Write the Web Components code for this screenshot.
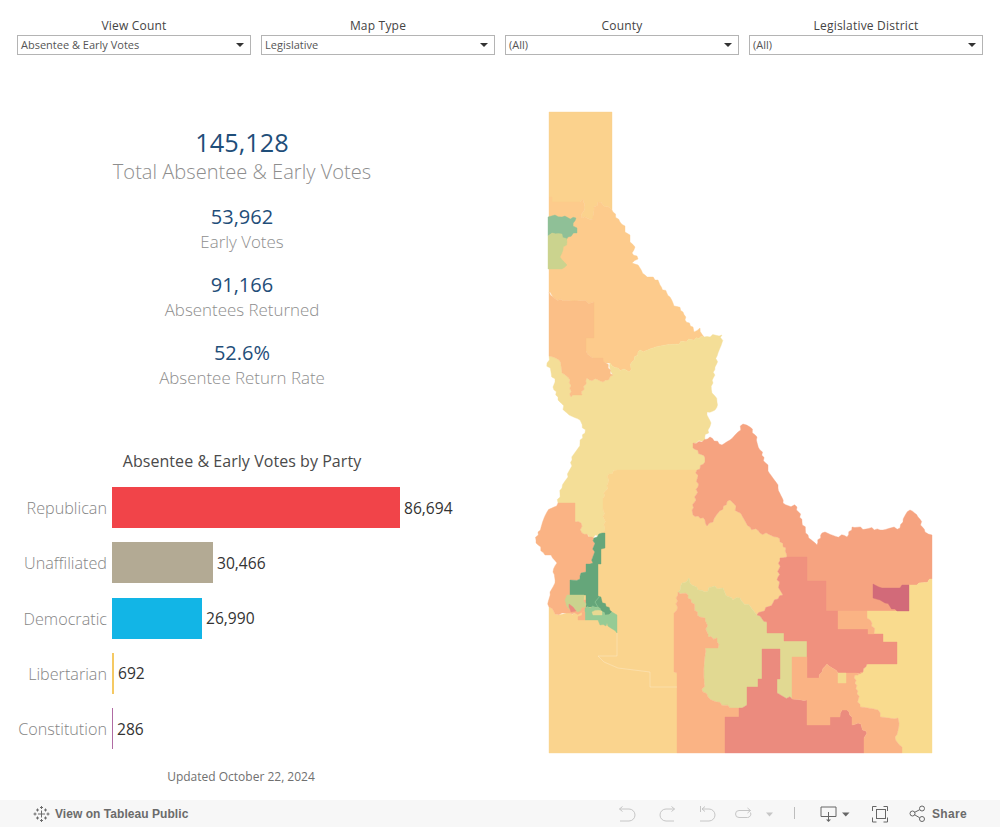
<!DOCTYPE html>
<html>
<head>
<meta charset="utf-8">
<title>Absentee & Early Votes</title>
<style>
  html, body { margin: 0; padding: 0; background: #fff; }
</style>
</head>
<body>
<dash-board>
  <div slot="filters">
    <filter-select label="View Count" value="Absentee &amp; Early Votes"></filter-select>
    <filter-select label="Map Type" value="Legislative"></filter-select>
    <filter-select label="County" value="(All)"></filter-select>
    <filter-select label="Legislative District" value="(All)"></filter-select>
  </div>
  <div slot="left">
    <kpi-stat big value="145,128" label="Total Absentee &amp; Early Votes"></kpi-stat>
    <kpi-stat value="53,962" label="Early Votes"></kpi-stat>
    <kpi-stat value="91,166" label="Absentees Returned"></kpi-stat>
    <kpi-stat value="52.6%" label="Absentee Return Rate"></kpi-stat>
    <party-chart title-text="Absentee &amp; Early Votes by Party" updated="Updated October 22, 2024">
      <party-bar name="Republican" width="288" color="#f14449" count="86,694"></party-bar>
      <party-bar name="Unaffiliated" width="101" color="#b3aa94" count="30,466"></party-bar>
      <party-bar name="Democratic" width="90" color="#12b5e6" count="26,990"></party-bar>
      <party-bar name="Libertarian" width="2" color="#f5c963" count="692"></party-bar>
      <party-bar name="Constitution" width="1" color="#b06ba3" count="286"></party-bar>
    </party-chart>
  </div>
  <idaho-map slot="map"></idaho-map>
  <viz-toolbar slot="toolbar"></viz-toolbar>
</dash-board>

<script>
const FONT = '"Open Sans", "Noto Sans", sans-serif';
const esc = (s) => s.replace(/&/g, "&amp;");

class DashBoard extends HTMLElement {
  constructor() {
    super();
    this.attachShadow({ mode: "open" }).innerHTML = `
    <style>
      :host { display: flex; flex-direction: column; width: 1000px; height: 827px; overflow: hidden; font-family: ${FONT}; }
      .filters ::slotted(div) { display: flex; gap: 10px; padding: 18px 17px 0; }
      .main { display: flex; flex: 1; min-height: 0; }
      .left { width: 484px; flex: none; }
      .left ::slotted(div) { display: flex; flex-direction: column; align-items: center; padding-top: 72px; }
      .right { flex: 1; padding: 50px 0 0 46px; }
    </style>
    <div class="filters"><slot name="filters"></slot></div>
    <div class="main">
      <div class="left"><slot name="left"></slot></div>
      <div class="right"><slot name="map"></slot></div>
    </div>
    <slot name="toolbar"></slot>`;
  }
}

class FilterSelect extends HTMLElement {
  constructor() {
    super();
    this.attachShadow({ mode: "open" }).innerHTML = `
    <style>
      :host { display: block; width: 234px; font-family: ${FONT}; }
      .title { text-align: center; font-size: 12px; line-height: 16px; padding-bottom: 1px; letter-spacing: .2px; color: #444; }
      .box { box-sizing: border-box; height: 20px; border: 1px solid #b4b4b4; display: flex; align-items: center; justify-content: space-between; padding: 0 6px 0 3px; font-size: 11px; line-height: 18px; color: #555; }
      .arrow { width: 0; height: 0; border-left: 4px solid transparent; border-right: 4px solid transparent; border-top: 4px solid #333; }
    </style>
    <div class="title">${this.getAttribute("label")}</div>
    <div class="box"><span>${esc(this.getAttribute("value"))}</span><span class="arrow"></span></div>`;
  }
}

class KpiStat extends HTMLElement {
  constructor() {
    super();
    const big = this.hasAttribute("big");
    this.attachShadow({ mode: "open" }).innerHTML = `
    <style>
      :host { display: flex; flex-direction: column; align-items: center; font-family: ${FONT}; margin-bottom: 18px; }
      .num { color: #1f4e79; font-weight: 500; font-size: ${big ? 25.3 : 20}px; line-height: ${big ? 30 : 28}px; padding-bottom: ${big ? 1 : 0}px; }
      .lab { color: #8e8e8e; font-weight: 300; font-size: ${big ? 20.1 : 16.9}px; line-height: ${big ? 27 : 22}px; }
    </style>
    <div class="num">${this.getAttribute("value")}</div>
    <div class="lab">${esc(this.getAttribute("label"))}</div>`;
  }
}

class PartyChart extends HTMLElement {
  constructor() {
    super();
    this.attachShadow({ mode: "open" }).innerHTML = `
    <style>
      :host { display: block; width: 484px; margin-top: 44px; font-family: ${FONT}; }
      .title { text-align: center; font-size: 16px; line-height: 20px; letter-spacing: .05px; color: #4a4a4a; }
      .rows { display: flex; flex-direction: column; gap: 14.25px; margin-top: 16px; }
      .upd { text-align: center; font-size: 12px; line-height: 16px; color: #707070; margin-top: 20px; padding-right: 2px; }
    </style>
    <div class="title">${esc(this.getAttribute("title-text"))}</div>
    <div class="rows"><slot></slot></div>
    <div class="upd">${this.getAttribute("updated")}</div>`;
  }
}

class PartyBar extends HTMLElement {
  constructor() {
    super();
    this.attachShadow({ mode: "open" }).innerHTML = `
    <style>
      :host { display: grid; grid-template-columns: 107px auto 1fr; align-items: center; height: 41px; font-family: ${FONT}; }
      .name { text-align: right; font-size: 16.2px; color: #858585; font-weight: 300; padding-top: 1px; }
      .bar { height: 41px; margin-left: 5px; background: ${this.getAttribute("color")}; width: ${this.getAttribute("width")}px; }
      .val { padding-left: 4px; font-size: 15.6px; color: #333; }
    </style>
    <div class="name">${this.getAttribute("name")}</div>
    <div class="bar"></div>
    <div class="val">${this.getAttribute("count")}</div>`;
  }
}

// district shapes, in page coordinates
const DISTRICTS = [
  ["#fbd28d", "549,112 612,112 612,210 610,208 598,202 594,207 593,219 582,218 584,207 583,199 580,202 552,202 552,197 549,197"],
  ["#fdcb8c", "549,197 552,197 552,202 580,202 583,199 584,207 582,218 593,219 594,207 598,202 610,208 612,210 613,212 620,222 625,226 625,232 630,235 630,242 635,247 632,253 638,259 632,263 640,268 645,275 658,280 660,285 670,297 673,303 683,312 685,320 693,327 694,332 700,328 704,337 638,352 632,362 629,372 618,368 610,363 603,362 593,358 586,351 586,338 594,338 594,302 563,301 553,297 550,292 549,292"],
  ["#8fc097", "548,217 555,215 562,217 576,218 573,226 577,228 577,233 568,237 565,242 562,235 552,233 548,236"],
  ["#cbd38e", "548,236 552,233 562,234 567,242 563,250 560,257 567,265 562,269 548,269"],
  ["#f4de97", "704,337 722,335 720,348 718,353 715,367 713,383 712,393 717,402 715,410 707,412 711,423 708,430 705,440 693,443 693,448 705,458 705,462 697,470 617,470 607,477 608,483 603,498 603,508 605,530 602,533 593,538 582,533 581,523 575,522 575,503 558,503 562,488 568,477 572,460 580,443 585,433 581,422 580,420 567,413 558,400 553,387 555,382 547,363 549,356 553,357 559,360 562,373 570,380 571,397 573,395 582,395 587,378 603,382 613,375 610,363 618,368 629,372 632,362 638,352"],
  ["#fbbf87", "549,292 553,297 563,301 594,302 594,338 586,338 586,351 593,358 603,358 613,375 603,382 587,378 582,395 573,395 571,397 570,380 562,373 559,360 553,357 549,356"],
  ["#fad48e", "617,470 697,470 698,487 692,510 693,515 705,520 707,526 713,522 718,513 730,500 738,512 750,527 760,533 777,537 786,548 787,557 780,558 778,577 780,590 783,595 773,603 757,615 740,598 733,600 725,593 723,588 712,587 705,592 698,590 690,583 689,578 682,583 678,592 677,610 674,613 674,672 677,673 677,753 549,753 549,607 555,614 575,613 602,533 605,530 603,508 603,498 608,483 607,477"],
  ["#f6a380", "693,443 702,442 710,437 722,445 730,440 738,432 743,424 750,427 757,437 760,450 768,468 778,488 783,503 797,507 802,522 808,535 817,545 822,533 847,537 852,527 880,530 900,528 903,522 910,510 918,517 925,532 932,535 932,579 917,585 909,585 909,611 826,611 826,581 807,581 807,557 787,557 786,548 777,537 760,533 750,527 738,512 730,500 718,513 713,522 707,526 705,520 693,515 692,510 698,487 697,470 705,462 705,458 693,448"],
  ["#f9db8e", "932,579 932,753 902,753 902,747 895,737 899,723 898,718 880,717 878,710 860,707 855,675 863,672 867,664 897,664 897,642 883,642 883,634 874,634 872,623 867,618 867,611 909,611 909,585 917,585"],
  ["#e1d992", "689,578 690,583 698,590 705,592 712,587 723,588 725,593 733,600 740,598 757,615 767,622 767,633 784,633 784,641 807,641 807,657 792,657 792,699 777,693 762,700 747,705 739,708 730,708 717,702 708,697 703,692 705,648 718,648 717,638 708,637 705,618 700,617 688,595 678,592 682,583"],
  ["#fab384", "678,592 688,595 700,617 705,618 708,637 717,638 718,648 705,648 703,692 708,697 717,702 730,708 739,708 739,717 725,717 725,753 677,753 677,673 674,672 674,613 677,610"],
  ["#eb8b7e", "762,649 780,649 780,679 777,679 777,693 792,699 807,700 807,725 830,725 830,717 840,717 842,710 847,710 852,717 852,725 858,723 867,733 864,738 864,753 725,753 725,717 739,717 739,708 747,705 747,687 758,687 758,679 762,679"],
  ["#f0917e", "780,558 787,557 807,557 807,581 826,581 826,611 838,611 838,629 868,629 868,634 883,634 883,642 897,642 897,664 867,664 863,672 853,673 838,673 827,664 822,672 819,678 807,678 807,641 784,641 784,633 767,633 767,622 757,615 773,603 783,595 780,590 778,577"],
  ["#fab384", "838,611 867,611 867,618 872,623 874,634 868,634 868,629 838,629"],
  ["#fab384", "792,657 807,657 807,678 819,678 822,672 827,664 838,673 853,673 863,672 855,675 860,707 878,710 880,717 898,718 899,723 895,737 902,747 902,753 864,753 864,738 867,733 858,723 852,725 852,717 847,710 842,710 840,717 830,717 830,725 807,725 807,700 792,699"],
  ["#f4da8e", "838,673 846,673 846,683 838,683"],
  ["#d26a79", "873,584 882,588 890,588 900,588 902,585 909,585 909,611 897,611 885,603 880,600 873,598"],
  ["#fab384", "563,600 586,600 586,612 572,614 563,612"],
  ["#fab384", "558,503 575,503 575,522 581,523 582,533 594,538 593,563 586,564 586,572 581,573 580,579 570,580 570,595 565,602 565,610 575,613 562,613 555,614 549,607 550,592 553,587 555,583 553,572 557,563 551,555 545,555 536,543 538,532 547,512"],
  ["#65a67a", "602,533 605,533 605,548 601,549 601,564 598,564 598,596 612,612 605,615 598,607 586,607 586,595 570,595 570,580 580,579 581,573 586,572 586,564 593,563 594,538"],
  ["#96cb95", "612,612 617,615 617,633 607,623 606,626 600,625 598,620 585,620 585,608 598,607 605,615"],
  ["#cbd38e", "567,595 584,595 585,607 578,612 568,608 565,600"],
  ["#eb8b7e", "569,604 573,607 576,611 571,612"],
  ["#fab384", "582,612 585,612 585,620 578,620"],
  ["#e8d992", "592,612 602,611 602,615 593,615"]
];

// jag the slanted borders so they read like rivers; same edge gives same jags in both neighbours
function jagged(points) {
  const pts = points.split(" ").map((p) => p.split(",").map(Number));
  const out = [];
  pts.forEach((a, i) => {
    const b = pts[(i + 1) % pts.length];
    out.push(a);
    const dx = b[0] - a[0], dy = b[1] - a[1], len = Math.hypot(dx, dy);
    if (dx === 0 || dy === 0 || len < 6) return;
    const flip = a[0] > b[0] || (a[0] === b[0] && a[1] > b[1]);
    const [p, q] = flip ? [b, a] : [a, b];
    const n = Math.floor(len / 2.6), mid = [];
    for (let k = 1; k < n; k++) {
      const h = Math.sin(p[0] * 12.9 + p[1] * 78.2 + k * 37.7) * 43758.5;
      const off = (h - Math.floor(h) - 0.5) * 3.2;
      mid.push([p[0] + (q[0] - p[0]) * k / n - (q[1] - p[1]) / len * off, p[1] + (q[1] - p[1]) * k / n + (q[0] - p[0]) / len * off]);
    }
    if (flip) mid.reverse();
    out.push(...mid);
  });
  return out.map((p) => p[0].toFixed(1) + "," + p[1].toFixed(1)).join(" ");
}

class IdahoMap extends HTMLElement {
  constructor() {
    super();
    const shapes = DISTRICTS.map(([c, p]) => `<polygon fill="${c}" stroke="${c}" stroke-width=".4" points="${jagged(p)}"/>`).join("");
    this.attachShadow({ mode: "open" }).innerHTML = `
    <style>
      :host { display: block; width: 410px; height: 655px; }
      svg { display: block; }
    </style>
    <svg width="410" height="655" viewBox="530 105 410 655">
      ${shapes}
      <polyline fill="none" stroke="#fff" stroke-opacity=".35" stroke-width=".7" points="617,633 617,656 598,656 604,662 618,668 650,672 650,687 677,687"/>
      <path fill="none" stroke="#8fc898" stroke-width=".7" d="M595 602 L600 596 M595 602 L598 607"/>
    </svg>`;
  }
}

class VizToolbar extends HTMLElement {
  constructor() {
    super();
    this.attachShadow({ mode: "open" }).innerHTML = `
    <style>
      :host { display: flex; align-items: center; justify-content: space-between; height: 27px; background: #f7f7f7; font-family: "Liberation Sans", Arial, sans-serif; font-size: 12px; font-weight: 700; color: #6b6b6b; }
      .left { display: flex; align-items: center; padding-left: 33px; gap: 5px; }
      .left span { letter-spacing: .05px; }
      .right { display: flex; align-items: center; padding-right: 33px; }
      svg { display: block; }
      .share { margin-left: 4px; letter-spacing: .35px; }
    </style>
    <div class="left">
      <svg width="17" height="18" viewBox="0 0 17 18" fill="none" stroke="#6b6b6b" stroke-width="1">
        <path d="M8.500 5.500v7M5 9h7"/>
        <path d="M8.500 1v3M7 2.500h3M8.500 14v3M7 15.500h3"/>
        <path d="M2 7.500v3M.5 9h3M15 7.500v3M13.500 9h3"/>
        <path d="M4.500 3.500v3M3 5h3M12.500 3.500v3M11 5h3M4.500 11.500v3M3 13h3M12.500 11.500v3M11 13h3"/>
      </svg>
      <span>View on Tableau Public</span>
    </div>
    <div class="right">
      <svg width="310" height="27" viewBox="619 800 310 27" fill="none" stroke-width="1">
        <g stroke="#c6c6c6">
          <path d="M620.500 809H630a6 6 0 0 1 0 12h-9M620.500 809l3-2.500M620.500 809l3 2.500"/>
          <path d="M675.500 809H667a6 6 0 0 0 0 12h8M675.500 809l-3-2.500M675.500 809l-3 2.500"/>
          <path d="M701.500 806v6M703 809h7a6 6 0 0 1 0 12h-9M703 809l3-2.500M703 809l3 2.500"/>
          <path d="M751.500 810.500H740a3.500 3.500 0 0 0 0 7h8.500a3.500 3.500 0 0 0 3-5M751.500 810.500l-3-2.500M751.500 810.500l-3 2.500"/>
          <path d="M795.500 807v12" stroke="#bdbdbd"/>
        </g>
        <path d="M767 812.500h7l-3.500 4z" fill="#c6c6c6"/>
        <g stroke="#666">
          <path d="M829.500 816.500h-7.500v-9.500h15v9.500h-7.500M829.500 812v8"/>
          <path d="M827 819.500h5l-2.500 2.500z" fill="#666" stroke="none"/>
          <path d="M873.500 811v-4.500h4M884.500 806.500h4v4.500M888.500 817.500v4.500h-4M877.500 822h-4v-4.500"/>
          <rect x="877.500" y="809.500" width="9" height="9"/>
          <circle cx="913.500" cy="813.500" r="2.500"/>
          <circle cx="923" cy="808.500" r="2.500"/>
          <circle cx="923" cy="819" r="2.500"/>
          <path d="M915.700 812.300l5-2.600M915.700 814.800l5 3"/>
        </g>
        <path d="M843 812.500h7.500l-3.750 4z" fill="#666"/>
      </svg>
      <span class="share">Share</span>
    </div>`;
  }
}

customElements.define("dash-board", DashBoard);
customElements.define("filter-select", FilterSelect);
customElements.define("kpi-stat", KpiStat);
customElements.define("party-chart", PartyChart);
customElements.define("party-bar", PartyBar);
customElements.define("idaho-map", IdahoMap);
customElements.define("viz-toolbar", VizToolbar);
</script>
</body>
</html>
